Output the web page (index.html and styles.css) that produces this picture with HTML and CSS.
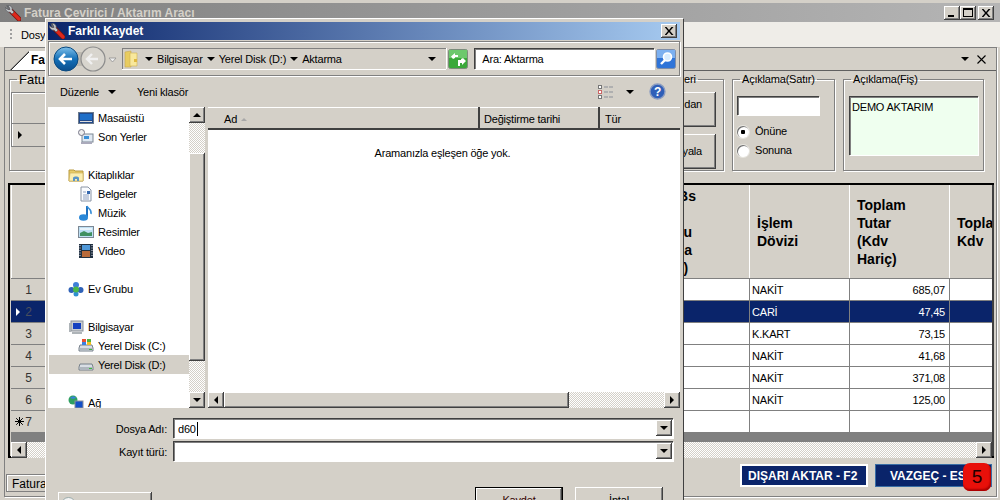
FILE: index.html
```html
<!DOCTYPE html>
<html lang="tr">

<head>
  <meta charset="UTF-8">
  <title>Fatura Çevirici / Aktarım Aracı</title>
  <link rel="stylesheet" href="styles.css">
</head>

<body>

  <svg class="defs" width="0" height="0">
    <symbol id="wrench" viewBox="0 0 16 16">
      <path d="M6 6l8 8" stroke="#7a1510" stroke-width="5" stroke-linecap="round"/>
      <path d="M6 6l8 8" stroke="#e0281c" stroke-width="3.200" stroke-linecap="round"/>
      <path d="M2 .5L4 3l-.5 1.500L5 4.500 4.500 3 3 .5C5 0 8 2 7 5l2 2-2 2-2-2C3 8 0 5 .5 2.500L2 4l1.500.5z" fill="#c4c6ca" stroke="#55585c" stroke-width=".7"/>
    </symbol>
    <symbol id="folder" viewBox="0 0 16 16">
      <path d="M1 3h5l1 1h8v10H1z" fill="#e8cc68" stroke="#b89a40"/>
      <path d="M2 6h13v8H1z" fill="#fbeeb0" stroke="#c8aa50" stroke-width=".6"/>
      <path d="M5 14v-3c0-2 6-2 6 0v3h-2v-2H7v2z" fill="#5a96c8"/>
    </symbol>
    <symbol id="disk" viewBox="0 0 16 16">
      <path d="M2 7h12l1 3v3H1v-3z" fill="#d8dee4" stroke="#77808a"/>
      <rect x="2" y="10" width="12" height="3" fill="#aeb6be"/>
      <rect x="11" y="11" width="3" height="1" fill="#3db83d"/>
    </symbol>
    <symbol id="close" viewBox="0 0 9 8">
      <path d="M1 0l2.500 3L6 0h2L4.500 4 8 8H6L3.500 5 1 8H-1l3.500-4L-1 0z" transform="translate(.5)"/>
    </symbol>
  </svg>

  <!-- back window -->
  <div class="main">
    <div class="main__title">
      <svg class="main__icon"><use href="#wrench"/></svg>
      <span>Fatura Çevirici / Aktarım Aracı</span>
      <div class="capbtns">
        <button class="capbtn" type="button"><i class="capbtn__min"></i></button>
        <button class="capbtn" type="button"><i class="capbtn__max"></i></button>
        <button class="capbtn capbtn--close" type="button"><svg class="capbtn__x"><use href="#close"/></svg></button>
      </div>
    </div>

    <div class="menubar">
      <i class="menubar__grip"></i>
      <span>Dosya</span>
    </div>

    <div class="panel">
      <div class="tabs">
        <div class="tabs__tab">Fatura</div>
        <div class="tabs__tools">
          <i class="arrow-down"></i>
          <svg width="9" height="9" viewBox="0 0 9 9"><path d="M.5.5l8 8M8.500.5l-8 8" stroke="#000" stroke-width="1.100"/></svg>
        </div>
      </div>

      <div class="groups">
        <fieldset class="group group--wide">
          <legend>Fatura</legend>
          <div class="mini">
            <div class="mini__head"></div>
            <div class="mini__row"><i class="arrow-right"></i></div>
          </div>
        </fieldset>
        <fieldset class="group group--actions">
          <legend>eri</legend>
          <button class="btn btn--action btn--top" type="button">dan</button>
          <button class="btn btn--action" type="button">yala</button>
        </fieldset>
        <fieldset class="group group--line">
          <legend>Açıklama(Satır)</legend>
          <div class="field field--line"></div>
          <label class="radio"><i class="radio__dot radio__dot--on"></i>Önüne</label>
          <label class="radio"><i class="radio__dot"></i>Sonuna</label>
        </fieldset>
        <fieldset class="group group--note">
          <legend>Açıklama(Fiş)</legend>
          <div class="field field--note">DEMO AKTARIM</div>
        </fieldset>
      </div>

      <div class="grid">
        <div class="grid__table">
          <div class="grid__row grid__row--head">
            <div class="cell cell--rowhead"></div>
            <div class="cell cell--fill cell--clipped">Bs<br><br>u&nbsp;<br>ca&nbsp;<br>)&nbsp;&nbsp;</div>
            <div class="cell">İşlem<br>Dövizi</div>
            <div class="cell">Toplam<br>Tutar<br>(Kdv<br>Hariç)</div>
            <div class="cell">Toplam<br>Kdv</div>
          </div>
          <div class="grid__row">
            <div class="cell cell--rowhead">1</div><div class="cell cell--fill"></div><div class="cell">NAKİT</div><div class="cell cell--num">685,07</div><div class="cell"></div>
          </div>
          <div class="grid__row grid__row--selected">
            <div class="cell cell--rowhead"><i class="arrow-right arrow-right--white"></i>2</div><div class="cell cell--fill"></div><div class="cell">CARİ</div><div class="cell cell--num">47,45</div><div class="cell"></div>
          </div>
          <div class="grid__row">
            <div class="cell cell--rowhead">3</div><div class="cell cell--fill"></div><div class="cell">K.KART</div><div class="cell cell--num">73,15</div><div class="cell"></div>
          </div>
          <div class="grid__row">
            <div class="cell cell--rowhead">4</div><div class="cell cell--fill"></div><div class="cell">NAKİT</div><div class="cell cell--num">41,68</div><div class="cell"></div>
          </div>
          <div class="grid__row">
            <div class="cell cell--rowhead">5</div><div class="cell cell--fill"></div><div class="cell">NAKİT</div><div class="cell cell--num">371,08</div><div class="cell"></div>
          </div>
          <div class="grid__row">
            <div class="cell cell--rowhead">6</div><div class="cell cell--fill"></div><div class="cell">NAKİT</div><div class="cell cell--num">125,00</div><div class="cell"></div>
          </div>
          <div class="grid__row">
            <div class="cell cell--rowhead">
              <svg class="star" width="9" height="9" viewBox="0 0 9 9"><path d="M4.500 0v9M0 4.500h9M1.200 1.200l6.600 6.600M7.800 1.200L1.200 7.800" stroke="#000"/></svg>7
            </div>
            <div class="cell cell--fill"></div><div class="cell"></div><div class="cell"></div><div class="cell"></div>
          </div>
        </div>
        <div class="grid__band"></div>
        <div class="hscroll hscroll--grid">
          <button class="sbtn" type="button"><i class="arrow-left"></i></button>
          <div class="hatch"></div>
          <button class="sbtn" type="button"><i class="arrow-right"></i></button>
        </div>
      </div>

      <div class="footer">
        <div class="footer__tab">Fatura</div>
        <button class="navy navy--default" type="button">DIŞARI AKTAR - F2</button>
        <button class="navy" type="button">VAZGEÇ - ESC</button>
      </div>
    </div>
  </div>

  <div class="badge">5</div>

  <!-- save dialog -->
  <div class="dialog">
    <div class="dialog__title">
      <svg class="main__icon"><use href="#wrench"/></svg>
      <span>Farklı Kaydet</span>
      <button class="capbtn capbtn--close" type="button"><svg class="capbtn__x"><use href="#close"/></svg></button>
    </div>

    <div class="address">
      <div class="navbtns">
        <svg width="66" height="26" viewBox="0 0 66 26">
          <defs>
            <linearGradient id="backfill" x1="0" y1="0" x2="0" y2="1">
              <stop offset="0" stop-color="#7fc0ea"/>
              <stop offset=".5" stop-color="#1470b8"/>
              <stop offset="1" stop-color="#0a4d8c"/>
            </linearGradient>
          </defs>
          <rect x="14" y="6" width="30" height="14" fill="#bdbab2"/>
          <circle cx="40" cy="13" r="12" fill="#d8d5ce" stroke="#8c8c8c" stroke-width="1.200"/>
          <path d="M34 13h11M39 8l-5 5 5 5" fill="none" stroke="#f0f0f0" stroke-width="2.400"/>
          <circle cx="13" cy="13" r="12" fill="url(#backfill)" stroke="#0b4a80"/>
          <path d="M7 13h12M12 8l-5 5 5 5" fill="none" stroke="#fff" stroke-width="2.600"/>
          <path d="M56 12h7l-3.500 4z" fill="#eee" stroke="#888" stroke-width=".7"/>
        </svg>
      </div>
      <div class="crumbs">
        <svg class="crumbs__folder" viewBox="0 0 14 18">
          <path d="M1 2l6-1v16H1z" fill="#e8cc60" stroke="#c8aa50" stroke-width=".6"/>
          <path d="M6 3h7v13H6z" fill="#f8e89c" stroke="#cfb050" stroke-width=".6"/>
          <path d="M10 9h3v3h-3z" fill="#e0b840"/>
        </svg>
        <i class="arrow-down"></i><span>Bilgisayar</span>
        <i class="arrow-down"></i><span>Yerel Disk (D:)</span>
        <i class="arrow-down"></i><span>Aktarma</span>
        <i class="arrow-down crumbs__end"></i>
      </div>
      <svg class="refresh" width="20" height="20" viewBox="0 0 20 20">
        <rect x=".5" y=".5" width="19" height="19" rx="2" fill="#3aa83a" stroke="#7c8c7c"/>
        <rect x="1" y="1" width="18" height="8" fill="#6cc86c"/>
        <path d="M10 6H7V4L3 7.500 5 10l2-1V8h3zM10 11h3v-1l2-1 3 3-4 4v-2h-2v3h-2z" fill="#fff"/>
      </svg>
      <div class="search">Ara: Aktarma</div>
      <svg class="search__btn" width="20" height="20" viewBox="0 0 20 20">
        <rect x=".5" y=".5" width="19" height="19" rx="2" fill="#2f74d8" stroke="#7f8ea8"/>
        <rect x="1" y="1" width="18" height="8" fill="#7cb0f0"/>
        <circle cx="11.500" cy="8" r="4" fill="#d8ecff" stroke="#fff" stroke-width="1.600"/>
        <path d="M9 11l-4 4" stroke="#fff" stroke-width="2.400"/>
      </svg>
    </div>

    <div class="toolbar">
      <span class="toolbar__item">Düzenle</span><i class="arrow-down"></i>
      <span class="toolbar__item toolbar__item--new">Yeni klasör</span>
      <div class="toolbar__right">
        <svg width="16" height="14" viewBox="0 0 16 14">
          <path d="M6 2h9M6 7h9M6 12h9" stroke="#8a8f98" stroke-dasharray="4 1"/>
          <rect x=".5" y=".5" width="3" height="3" fill="#fff" stroke="#777"/>
          <rect x=".5" y="5.500" width="3" height="3" fill="#fff" stroke="#c66"/>
          <rect x=".5" y="10.500" width="3" height="3" fill="#fff" stroke="#777"/>
        </svg>
        <i class="arrow-down toolbar__caret"></i>
        <svg width="17" height="17" viewBox="0 0 17 17">
          <circle cx="8.500" cy="8.500" r="7.500" fill="#2f5fb8" stroke="#8a9cc0" stroke-width="1.400"/>
          <text x="8.500" y="12.500" text-anchor="middle" class="toolbar__help">?</text>
        </svg>
      </div>
    </div>

    <div class="browser">
      <div class="tree">
        <ul class="tree__list">
          <li class="tree__item tree__item--sub">
            <svg class="tree__icon" viewBox="0 0 16 16"><rect x=".5" y="2.500" width="15" height="11" fill="#234a8c" stroke="#6b7a8c"/><rect x="2" y="4" width="12" height="6" fill="#1f6fc8"/><rect x="2" y="11" width="12" height="1" fill="#ddd"/></svg>
            Masaüstü
          </li>
          <li class="tree__item tree__item--sub">
            <svg class="tree__icon" viewBox="0 0 16 16"><rect x="4" y="5" width="11" height="8" fill="#dfe8f2" stroke="#7c8894"/><rect x="6" y="7" width="5" height="3" fill="#3a90d8"/><rect x="3" y="13" width="11" height="2" fill="#aab"/><circle cx="3.500" cy="3.500" r="3" fill="#eee" stroke="#778"/></svg>
            Son Yerler
          </li>
          <li class="tree__item tree__item--blank"></li>
          <li class="tree__item">
            <svg class="tree__icon"><use href="#folder"/></svg>
            Kitaplıklar
          </li>
          <li class="tree__item tree__item--sub">
            <svg class="tree__icon" viewBox="0 0 16 16"><path d="M3 1h7l3 3v11H3z" fill="#fafcff" stroke="#8a94a4"/><path d="M5 6h3M5 9h6M5 11h6M5 13h6" stroke="#8ea0c0"/><rect x="9" y="5" width="3" height="3" fill="#3468b0"/></svg>
            Belgeler
          </li>
          <li class="tree__item tree__item--sub">
            <svg class="tree__icon" viewBox="0 0 16 16"><path d="M9 1v11" stroke="#1d70c0" stroke-width="2"/><path d="M9 1c1 3 5 3 4 8" fill="none" stroke="#3a90d8" stroke-width="1.500"/><ellipse cx="5.500" cy="12.500" rx="4.500" ry="3.200" fill="#2a88d8"/></svg>
            Müzik
          </li>
          <li class="tree__item tree__item--sub">
            <svg class="tree__icon" viewBox="0 0 16 16"><rect x=".5" y="2.500" width="15" height="11" fill="#bfe0f4" stroke="#7c8894"/><path d="M2 9l4-2 4 2 4-1v4H2z" fill="#3f9060"/><rect x="2" y="4" width="12" height="2" fill="#e8f4fc"/></svg>
            Resimler
          </li>
          <li class="tree__item tree__item--sub">
            <svg class="tree__icon" viewBox="0 0 16 16"><rect x="1" y="1" width="14" height="14" fill="#203040"/><rect x="4" y="2" width="8" height="5" fill="#4f98d8"/><rect x="4" y="8" width="8" height="6" fill="#b86a3a"/><path d="M2 2v12M14 2v12" stroke="#dde" stroke-dasharray="1 1.500"/></svg>
            Video
          </li>
          <li class="tree__item tree__item--blank"></li>
          <li class="tree__item">
            <svg class="tree__icon" viewBox="0 0 16 16"><circle cx="3.500" cy="9" r="3" fill="#2f62b8"/><circle cx="8" cy="4" r="3" fill="#3f80d8"/><circle cx="12.500" cy="9" r="3" fill="#2f62b8"/><circle cx="8" cy="13" r="2.500" fill="#2f8fd0"/><circle cx="8" cy="8.500" r="3" fill="#4ab848"/></svg>
            Ev Grubu
          </li>
          <li class="tree__item tree__item--blank"></li>
          <li class="tree__item">
            <svg class="tree__icon" viewBox="0 0 16 16"><rect x="3" y="2" width="12" height="10" fill="#c8ccd0" stroke="#8a9098"/><rect x="5" y="4" width="8" height="6" fill="#1440c0"/><rect x="1" y="4" width="2" height="9" fill="#aeb4b8"/><rect x="4" y="13" width="10" height="2" fill="#aeb4b8"/></svg>
            Bilgisayar
          </li>
          <li class="tree__item tree__item--sub">
            <svg class="tree__icon" viewBox="0 0 16 16"><use href="#disk"/><rect x="4" y="1" width="4" height="3" fill="#e85030"/><rect x="9" y="1" width="4" height="3" fill="#50b040"/><rect x="4" y="4" width="4" height="3" fill="#3a80e0"/><rect x="9" y="4" width="4" height="3" fill="#f0c020"/></svg>
            Yerel Disk (C:)
          </li>
          <li class="tree__item tree__item--sub tree__item--active">
            <svg class="tree__icon"><use href="#disk"/></svg>
            Yerel Disk (D:)
          </li>
          <li class="tree__item tree__item--blank"></li>
          <li class="tree__item">
            <svg class="tree__icon" viewBox="0 0 16 16"><circle cx="5" cy="5" r="4.500" fill="#2fa060"/><path d="M2 3c2-2 5-2 6 0-2 1-4 1-6 0z" fill="#3a80e0"/><rect x="7" y="6" width="8" height="7" fill="#1450c8" stroke="#8a9098"/><rect x="10" y="13" width="2" height="3" fill="#778"/></svg>
            Ağ
          </li>
        </ul>
      </div>
      <div class="vscroll">
        <button class="sbtn sbtn--v" type="button"><i class="arrow-up"></i></button>
        <div class="hatch vscroll__top"></div>
        <div class="vscroll__thumb"></div>
        <div class="hatch"></div>
        <button class="sbtn sbtn--v" type="button"><i class="arrow-down"></i></button>
      </div>
      <div class="files">
        <div class="files__head">
          <div class="files__col files__col--name">Ad <i class="files__sort"></i></div>
          <div class="files__col files__col--date">Değiştirme tarihi</div>
          <div class="files__col files__col--type">Tür</div>
        </div>
        <div class="files__body">Aramanızla eşleşen öğe yok.</div>
        <div class="hscroll">
          <button class="sbtn" type="button"><i class="arrow-left"></i></button>
          <div class="hscroll__thumb"></div>
          <div class="hatch"></div>
          <button class="sbtn" type="button"><i class="arrow-right"></i></button>
        </div>
      </div>
    </div>

    <div class="form">
      <div class="form__row">
        <label class="form__label">Dosya Adı:</label>
        <div class="combo"><span class="combo__text">d60</span><button class="sbtn" type="button"><i class="arrow-down"></i></button></div>
      </div>
      <div class="form__row">
        <label class="form__label">Kayıt türü:</label>
        <div class="combo"><span class="combo__text"></span><button class="sbtn" type="button"><i class="arrow-down"></i></button></div>
      </div>
    </div>

    <div class="actions">
      <button class="btn btn--hide" type="button"><i class="btn__circle"></i>Klasörleri Gizle</button>
      <button class="btn btn--dialog btn--default" type="button">Kaydet</button>
      <button class="btn btn--dialog" type="button">İptal</button>
    </div>
  </div>

</body>

</html>
```

FILE: styles.css
```css
*,
*:after,
*:before {
  box-sizing: border-box;
  margin: 0;
  padding: 0;
}

html,
body {
  width: 1000px;
  height: 500px;
  overflow: hidden;
}

body {
  position: relative;
  background: #d4d0c8;
  color: #000;
  font-family: "Liberation Sans", sans-serif;
  font-size: 11px;
  letter-spacing: -.2px;
}

button {
  font: inherit;
  color: inherit;
  letter-spacing: inherit;
}

.defs {
  position: absolute;
}

/* little triangles */
.arrow-down,
.arrow-up,
.arrow-left,
.arrow-right {
  display: inline-block;
  width: 0;
  height: 0;
  border-style: solid;
  border-color: transparent;
}

.arrow-down {
  border-width: 4px 4px 0;
  border-top-color: #000;
}

.arrow-up {
  border-width: 0 4px 4px;
  border-bottom-color: #000;
}

.arrow-left {
  border-width: 4px 4px 4px 0;
  border-right-color: #000;
}

.arrow-right {
  border-width: 4px 0 4px 4px;
  border-left-color: #000;
}

.arrow-right--white {
  border-left-color: #fff;
}

.hatch {
  flex: 1;
  background: repeating-conic-gradient(#fff 0 25%, #d4d0c8 0 50%) 0 0 / 2px 2px;
}

.sbtn {
  display: flex;
  flex: none;
  align-items: center;
  justify-content: center;
  width: 16px;
  height: 16px;
  border: 0;
  background: #d4d0c8;
  box-shadow: inset -1px -1px #404040, inset 1px 1px #fff, inset -2px -2px #808080;
}

.btn {
  display: block;
  border: 0;
  background: #d4d0c8;
  box-shadow: inset -1px -1px #404040, inset 1px 1px #fff, inset -2px -2px #808080;
}

/* back window */
.main {
  display: flex;
  flex-direction: column;
  height: 500px;
  padding-top: 3px;
}

.main__title {
  display: flex;
  flex: none;
  align-items: center;
  height: 19px;
  padding: 0 6px 0 5px;
  background: linear-gradient(90deg, #808080, #b5b5b5);
  color: #d4d0c8;
  font-size: 12px;
  font-weight: 700;
  letter-spacing: 0;
}

.main__icon {
  flex: none;
  width: 16px;
  height: 16px;
  margin-right: 3px;
}

.capbtns {
  display: flex;
  margin-left: auto;
}

.capbtn {
  display: flex;
  flex: none;
  align-items: center;
  justify-content: center;
  width: 16px;
  height: 14px;
  border: 0;
  background: #d4d0c8;
  box-shadow: inset -1px -1px #404040, inset 1px 1px #fff, inset -2px -2px #808080;
  color: #000;
}

.capbtn--close {
  margin-left: 2px;
}

.capbtn__x {
  width: 9px;
  height: 8px;
}

.capbtn__min {
  width: 6px;
  height: 2px;
  margin: 7px 3px 0 0;
  background: #000;
}

.capbtn__max {
  width: 10px;
  height: 9px;
  border: 1px solid #000;
  border-top-width: 2px;
}

.menubar {
  display: flex;
  flex: none;
  align-items: center;
  height: 25px;
  padding-left: 10px;
  background: #efede8;
}

.menubar__grip {
  width: 2px;
  height: 11px;
  margin-right: 9px;
  background: repeating-linear-gradient(#a0a0a0 0 2px, transparent 2px 4px);
}

.panel {
  display: flex;
  flex: 1;
  flex-direction: column;
  margin: 0 3px 3px 4px;
  border: 1px solid #808080;
  box-shadow: 1px 1px #fff;
}

.tabs {
  display: flex;
  flex: none;
  align-items: flex-end;
  justify-content: space-between;
  height: 23px;
  padding: 0 10px 0 5px;
  border-bottom: 1px solid #606060;
}

.tabs__tab {
  position: relative;
  width: 60px;
  height: 19px;
  padding: 2px 0 0 21px;
  background: #fff;
  clip-path: polygon(19px 0, 100% 0, 100% 100%, 0 100%);
  font-size: 12px;
  font-weight: 700;
  letter-spacing: 0;
}

.tabs__tab:before {
  content: "";
  position: absolute;
  top: 0;
  left: 0;
  width: 19px;
  height: 19px;
  background: linear-gradient(to bottom right, #d4d0c8 48%, #303030 48% 54%, #fff 54%);
}

.tabs__tools {
  display: flex;
  align-items: center;
  gap: 8px;
  height: 22px;
}

.groups {
  display: flex;
  flex: none;
  gap: 8px;
  height: 112px;
  padding: 2px 0 0 4px;
}

.group {
  position: relative;
  height: 98px;
  padding: 0;
  border: 1px solid #808080;
  box-shadow: inset 1px 1px #fff, 1px 1px #fff;
  line-height: 13px;
}

.group legend {
  margin-left: 7px;
  padding: 0 2px;
}

.group--wide {
  width: 608px;
}

.group--wide legend {
  font-size: 13px;
  letter-spacing: 0;
}

.group--actions {
  width: 98px;
  overflow: hidden;
}

.group--actions legend {
  margin-left: 56px;
}

.group--line {
  width: 103px;
}

.group--note {
  width: 141px;
}

.mini {
  width: 40px;
  height: 55px;
  margin: 6px 0 0 1px;
  border: 1px solid #808080;
  box-shadow: inset 1px 1px #fff;
}

.mini__head {
  height: 31px;
  border-bottom: 1px solid #808080;
}

.mini__row {
  display: flex;
  align-items: center;
  height: 22px;
  padding-left: 6px;
}

.btn--action {
  width: 90px;
  height: 35px;
  margin: 0 7px 0 auto;
  padding-right: 14px;
  text-align: right;
}

.btn--top {
  margin-top: 6px;
  margin-bottom: 7px;
  padding-bottom: 11px;
}

.field {
  background: #fff;
  box-shadow: inset 1px 1px #404040, inset 2px 2px #808080, 1px 1px #fff;
}

.field--line {
  width: 82px;
  height: 19px;
  margin: 10px 0 7px 4px;
}

.field--note {
  width: 129px;
  height: 59px;
  margin: 10px 0 0 5px;
  padding: 4px 3px;
  background: #efffef;
  line-height: 14px;
}

.radio {
  display: flex;
  align-items: center;
  gap: 6px;
  height: 19px;
  padding-left: 4px;
}

.radio__dot {
  width: 12px;
  height: 12px;
  border-radius: 50%;
  background: #fff;
  box-shadow: inset 1px 1px #707070, 0 0 0 1px #e8e6e0;
}

.radio__dot--on {
  background: radial-gradient(circle, #000 0 2px, #fff 2.500px);
}

.grid {
  display: flex;
  flex: none;
  flex-direction: column;
  width: 986px;
  height: 275px;
  margin-left: 3px;
  padding: 0 2px 0 1px;
  border-top: 2px solid #000;
  border-left: 2px solid #000;
  border-bottom: 2px solid #000;
  box-shadow: inset -2px 0 #404040;
}

.grid__table {
  flex: none;
}

.grid__row {
  display: grid;
  grid-template-columns: 35px 1fr 100px 100px 43px;
  height: 22px;
  background: #fff;
  border-bottom: 1px solid #808080;
  line-height: 23px;
}

.grid__row--head {
  height: 94px;
  background: #d4d0c8;
  font-size: 14px;
  font-weight: 700;
  letter-spacing: 0;
  line-height: 18px;
}

.grid__row--selected {
  background: #0a246a;
  color: #fff;
}

.cell {
  overflow: hidden;
  padding-left: 2px;
  border-left: 1px solid #808080;
  white-space: nowrap;
}

.grid__row--head .cell {
  display: flex;
  align-items: center;
  padding-left: 7px;
  border-left: 1px solid #fff;
}

.cell--rowhead {
  position: relative;
  padding: 0;
  border: 0;
  background: #d4d0c8;
  color: #333;
  font-size: 12px;
  text-align: center;
  box-shadow: inset -1px 0 #808080;
}

.grid__row--selected .cell--rowhead {
  background: #0a246a;
  color: #4a4f5c;
}

.cell--rowhead .arrow-right {
  position: absolute;
  top: 7px;
  left: 5px;
}

.star {
  position: absolute;
  top: 6px;
  left: 4px;
}

.cell--num {
  padding-right: 4px;
  text-align: right;
}

.grid__row--head .cell--clipped {
  align-items: flex-start;
  justify-content: flex-end;
  padding: 2px 53px 0 0;
  text-align: right;
}

.grid__band {
  flex: none;
  height: 9px;
  background: #808080;
}

.hscroll {
  display: flex;
  flex: none;
  height: 16px;
}

.hscroll--grid {
  flex: 1;
}

.hscroll__thumb {
  width: 345px;
  background: #d4d0c8;
  box-shadow: inset -1px -1px #404040, inset 1px 1px #fff, inset -2px -2px #808080;
}

.footer {
  position: relative;
  display: flex;
  flex: 1;
  align-items: flex-start;
  padding-top: 6px;
}

.footer__tab {
  position: absolute;
  top: 16px;
  left: 1px;
  width: 60px;
  height: 18px;
  padding: 2px 0 0 5px;
  border: 1px solid #808080;
  box-shadow: inset 1px 1px #fff;
  font-size: 12px;
  letter-spacing: 0;
}

.navy {
  width: 117px;
  height: 23px;
  margin-left: 7px;
  padding-left: 14px;
  border: 1px solid #3a6ea5;
  background: #0a246a;
  color: #fff;
  font-size: 12px;
  font-weight: 700;
  letter-spacing: 0;
  text-align: left;
  white-space: nowrap;
}

.navy--default {
  width: 128px;
  margin-left: auto;
  padding-left: 6px;
  border: 2px solid #fff;
}

.footer .navy:last-child {
  margin-right: 4px;
}

.badge {
  position: absolute;
  top: 463px;
  left: 963px;
  width: 28px;
  height: 28px;
  border-radius: 7px;
  background: #e8100a;
  box-shadow: inset -1px -2px 2px #a00;
  color: #200;
  font-size: 19px;
  line-height: 28px;
  text-align: center;
}

/* save dialog */
.dialog {
  position: absolute;
  top: 18px;
  left: 45px;
  display: flex;
  flex-direction: column;
  width: 639px;
  height: 500px;
  padding: 3px 3px 0 2px;
  border-top: 1px solid #fff;
  border-right: 1px solid #404040;
  border-left: 1px solid #fff;
  background: #d4d0c8;
}

.dialog__title {
  display: flex;
  flex: none;
  align-items: center;
  height: 18px;
  padding: 0 3px 0 1px;
  background: linear-gradient(90deg, #0a246a, #a6caf0);
  color: #fff;
  font-size: 12px;
  font-weight: 700;
  letter-spacing: 0;
}

.dialog__title .capbtn {
  margin-left: auto;
}

.address {
  display: flex;
  flex: none;
  align-items: center;
  height: 35px;
  margin-top: 1px;
  padding: 0 3px 0 4px;
  border: 1px solid #808080;
  box-shadow: inset 1px 1px #fff, 1px 1px #fff;
}

.navbtns {
  flex: none;
  width: 69px;
  height: 26px;
}

.crumbs {
  display: flex;
  align-items: center;
  width: 325px;
  height: 21px;
  padding-left: 2px;
  box-shadow: inset 0 1px #808080, inset 1px 0 #808080, 0 1px #fff, 1px 0 #fff;
}

.crumbs__folder {
  width: 14px;
  height: 18px;
  margin-right: 7px;
}

.crumbs span {
  margin: 0 4px;
}

.crumbs .arrow-down {
  flex: none;
}

.crumbs__end {
  margin-left: auto;
  margin-right: 10px;
}

.refresh {
  flex: none;
  margin-left: 2px;
}

.search {
  width: 180px;
  height: 21px;
  margin-left: 6px;
  padding: 5px 8px 0;
  background: #fff;
  box-shadow: inset 1px 1px #404040, inset 2px 2px #808080, 1px 1px #fff;
}

.search__btn {
  flex: none;
  margin-left: 2px;
}

.toolbar {
  display: flex;
  flex: none;
  align-items: center;
  height: 31px;
  padding-left: 12px;
}

.toolbar .arrow-down {
  margin-left: 9px;
}

.toolbar__item--new {
  margin-left: 21px;
}

.toolbar__right {
  display: flex;
  align-items: center;
  margin-left: auto;
  padding-right: 14px;
}

.toolbar .toolbar__caret {
  margin: 0 15px 0 12px;
}

.toolbar__help {
  fill: #fff;
  font-size: 12px;
  font-weight: 700;
}

.browser {
  display: flex;
  flex: none;
  height: 301px;
}

.tree {
  flex: none;
  width: 141px;
  overflow: hidden;
  background: #fff;
}

.tree__list {
  padding-top: 1px;
  list-style: none;
}

.tree__item {
  display: flex;
  align-items: center;
  gap: 4px;
  height: 19px;
  margin-left: 1px;
  padding-left: 19px;
  white-space: nowrap;
}

.tree__item--sub {
  padding-left: 29px;
}

.tree__item--active {
  background: #d4d0c8;
}

.tree__icon {
  flex: none;
  width: 16px;
  height: 16px;
}

.vscroll {
  display: flex;
  flex: none;
  flex-direction: column;
  width: 16px;
}

.sbtn--v {
  height: 16px;
}

.vscroll__top {
  flex: none;
  height: 30px;
}

.vscroll__thumb {
  flex: none;
  height: 208px;
  background: #d4d0c8;
  box-shadow: inset -1px -1px #404040, inset 1px 1px #fff, inset -2px -2px #808080;
}

.files {
  display: flex;
  flex: 1;
  flex-direction: column;
  margin-left: 3px;
}

.files__head {
  display: flex;
  flex: none;
  height: 23px;
  box-shadow: inset 0 -2px #404040, inset 0 1px #fff;
}

.files__col {
  display: flex;
  align-items: center;
  gap: 4px;
  padding: 1px 0 0 5px;
}

.files__col--name {
  width: 272px;
  padding-left: 16px;
  box-shadow: inset -2px 0 #404040;
}

.files__col--date {
  width: 120px;
  padding-left: 4px;
  box-shadow: inset -2px 0 #404040;
}

.files__col--type {
  flex: 1;
}

.files__sort {
  width: 0;
  height: 0;
  border: solid transparent;
  border-width: 0 3px 3px;
  border-bottom-color: #a8a8a8;
}

.files__body {
  flex: 1;
  padding: 17px 3px 0 0;
  background: #fff;
  text-align: center;
}

.form {
  display: flex;
  flex: none;
  flex-direction: column;
  gap: 3px;
  padding-top: 10px;
}

.form__row {
  display: flex;
  align-items: center;
  height: 20px;
}

.form__label {
  width: 119px;
  padding-top: 2px;
  text-align: right;
}

.combo {
  display: flex;
  align-items: center;
  justify-content: space-between;
  width: 500px;
  height: 20px;
  margin-left: 6px;
  padding-right: 1px;
  background: #fff;
  box-shadow: inset 1px 1px #404040, inset 2px 2px #808080, 1px 1px #fff;
}

.combo__text {
  margin-top: 2px;
  padding: 0 1px 0 5px;
  border-right: 1px solid #000;
  line-height: 14px;
}

.combo__text:empty {
  border: 0;
}

.actions {
  display: flex;
  flex: none;
  align-items: flex-start;
  padding: 26px 17px 0 10px;
}

.btn--hide {
  display: flex;
  flex: none;
  align-items: center;
  gap: 3px;
  width: 94px;
  height: 24px;
  margin-top: 5px;
  padding-left: 3px;
  overflow: hidden;
  white-space: nowrap;
}

.btn__circle {
  flex: none;
  width: 15px;
  height: 15px;
  border: 1px solid #9aa;
  border-radius: 50%;
  background: #f4f4f4;
}

.btn--dialog {
  width: 88px;
  height: 26px;
  margin-left: 12px;
}

.btn--default {
  margin-left: auto;
  border: 1px solid #000;
  color: #300;
}
```
